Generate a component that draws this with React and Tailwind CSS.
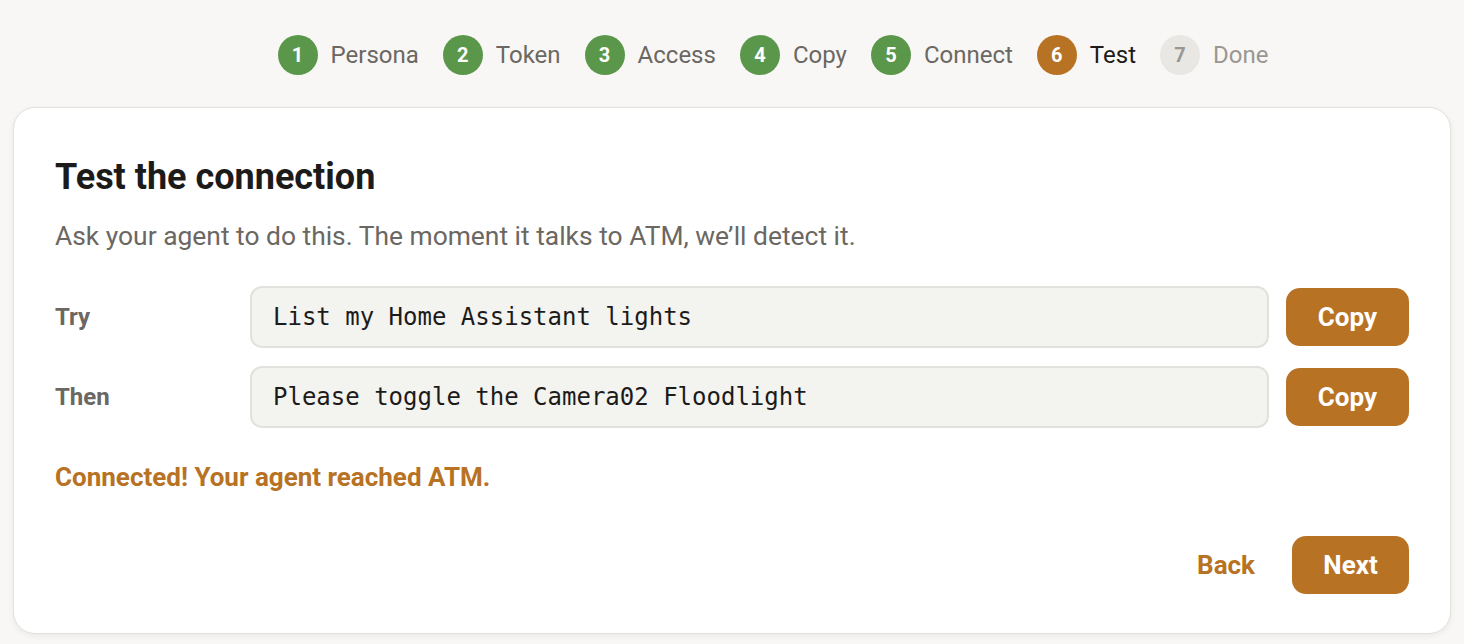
const steps = [
  { n: 1, label: "Persona", state: "done" },
  { n: 2, label: "Token", state: "done" },
  { n: 3, label: "Access", state: "done" },
  { n: 4, label: "Copy", state: "done" },
  { n: 5, label: "Connect", state: "done" },
  { n: 6, label: "Test", state: "current" },
  { n: 7, label: "Done", state: "todo" },
];

const prompts = [
  { label: "Try", text: "List my Home Assistant lights" },
  { label: "Then", text: "Please toggle the Camera02 Floodlight" },
];

function Step({ n, label, state }) {
  const circle =
    state === "done"
      ? "bg-[#5a974a] text-white"
      : state === "current"
      ? "bg-[#b87224] text-white"
      : "bg-[#e8e7e4] text-[#9a9792]";
  const text =
    state === "current"
      ? "text-[#1c1b1a]"
      : state === "done"
      ? "text-[#6b6762]"
      : "text-[#9a9792]";
  return (
    <div className="flex items-center gap-[13px]">
      <div
        className={`w-10 h-10 rounded-full flex items-center justify-center text-[20px] font-bold ${circle}`}
      >
        {n}
      </div>
      <span className={`text-[24px] ${text}`}>{label}</span>
    </div>
  );
}

export default function App() {
  return (
    <div
      className="min-h-screen bg-[#f8f7f5] px-[13px] pt-[35px] pb-[10px]"
      style={{ fontFamily: "Roboto, 'Liberation Sans', sans-serif" }}
    >
      <div className="flex justify-center gap-[24px] h-10 pl-[82px]">
        {steps.map((s) => (
          <Step key={s.n} {...s} />
        ))}
      </div>

      <div className="mt-8 bg-white border border-[#e3e1dd] rounded-[22px] shadow-[0_2px_6px_rgba(0,0,0,0.06)] px-[41px] pt-[49px] pb-[39px]">
        <h1 className="text-[36px] leading-[40px] font-bold text-[#1c1b1a]">
          Test the connection
        </h1>
        <p className="mt-[23px] text-[26.4px] leading-[32px] text-[#6b6762]">
          Ask your agent to do this. The moment it talks to ATM, we’ll detect it.
        </p>

        <div className="mt-[34px] flex flex-col gap-[18px]">
          {prompts.map((p) => (
            <div key={p.label} className="flex items-center">
              <span className="w-[195px] shrink-0 text-[24px] font-bold text-[#6b6762]">
                {p.label}
              </span>
              <div
                className="flex-1 h-[62px] flex items-center px-[21px] bg-[#f3f3f0] border-2 border-[#e2e1de] rounded-[12px] text-[24px] text-[#1c1b1a]"
                style={{ fontFamily: "'DejaVu Sans Mono', monospace" }}
              >
                {p.text}
              </div>
              <button className="ml-[17px] w-[123px] h-[58px] rounded-[14px] bg-[#b87224] text-white text-[26px] font-bold">
                Copy
              </button>
            </div>
          ))}
        </div>

        <p className="mt-[33px] text-[26px] leading-[32px] font-bold text-[#b87224]">
          Connected! Your agent reached ATM.
        </p>

        <div className="mt-[43px] flex justify-end items-center gap-[37px]">
          <button className="text-[26px] font-bold text-[#b87224]">Back</button>
          <button className="w-[117px] h-[58px] rounded-[14px] bg-[#b87224] text-white text-[26px] font-bold">
            Next
          </button>
        </div>
      </div>
    </div>
  );
}
